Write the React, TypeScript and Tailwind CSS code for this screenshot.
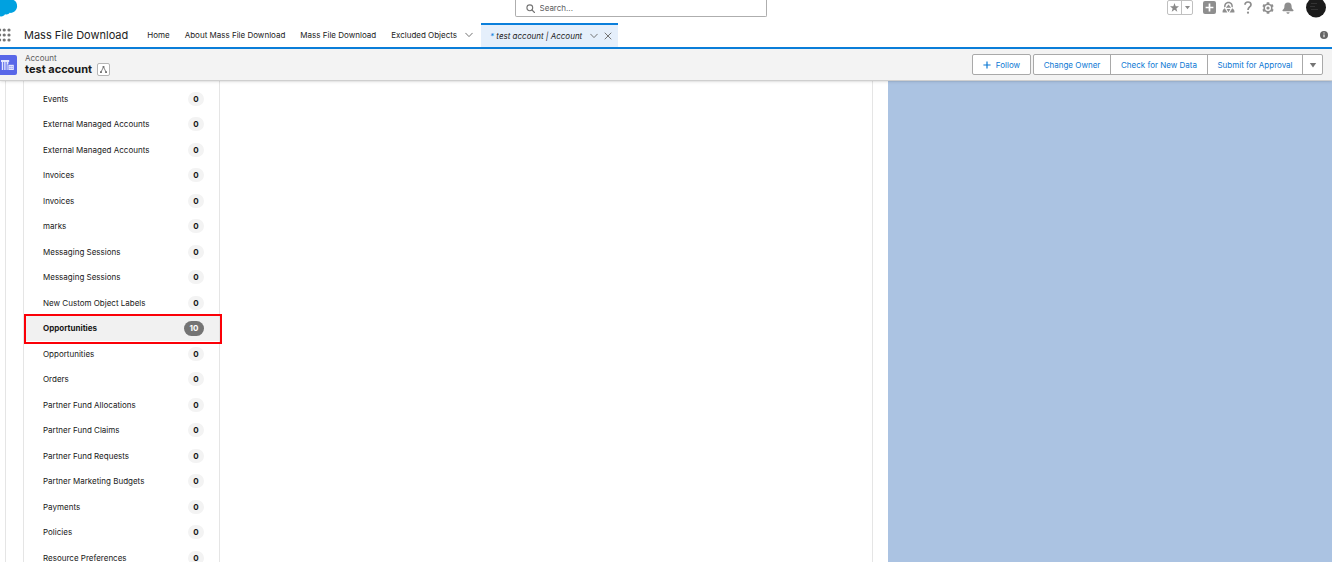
import React from 'react';

interface RelatedItem {
  label: string;
  count: number;
  selected?: boolean;
}

const relatedItems: RelatedItem[] = [
  { label: 'Events', count: 0 },
  { label: 'External Managed Accounts', count: 0 },
  { label: 'External Managed Accounts', count: 0 },
  { label: 'Invoices', count: 0 },
  { label: 'Invoices', count: 0 },
  { label: 'marks', count: 0 },
  { label: 'Messaging Sessions', count: 0 },
  { label: 'Messaging Sessions', count: 0 },
  { label: 'New Custom Object Labels', count: 0 },
  { label: 'Opportunities', count: 10, selected: true },
  { label: 'Opportunities', count: 0 },
  { label: 'Orders', count: 0 },
  { label: 'Partner Fund Allocations', count: 0 },
  { label: 'Partner Fund Claims', count: 0 },
  { label: 'Partner Fund Requests', count: 0 },
  { label: 'Partner Marketing Budgets', count: 0 },
  { label: 'Payments', count: 0 },
  { label: 'Policies', count: 0 },
  { label: 'Resource Preferences', count: 0 },
];

const navLinks = ['Home', 'About Mass File Download', 'Mass File Download'];

function Chevron() {
  return (
    <svg className="w-2 h-2" viewBox="0 0 8 8" fill="none" stroke="#747474" strokeWidth="1">
      <path d="M0.7 2.2 L4 5.6 L7.3 2.2" strokeLinecap="round" />
    </svg>
  );
}

function Caret() {
  return (
    <svg className="w-2 h-2" viewBox="0 0 8 8" fill="#747474">
      <path d="M0.8 2 H7.2 L4 6.4 Z" />
    </svg>
  );
}

function GlobalHeader() {
  return (
    <header className="flex items-start justify-between h-[23px]">
      <svg className="w-[18px] h-[17px] shrink-0" viewBox="0 0 18 17" fill="#00a1e0">
        <path d="M0 0 H13.6 C16 1.2 17.3 3.6 17.1 6.6 C16.8 10.6 13.4 13.4 9.7 12.8 C8.6 14.4 6.8 14.8 5 14.2 C4 16 2 16.8 0 16.2 Z" />
      </svg>
      <div className="flex items-center w-[252px] h-[17px] ml-24 pl-[10px] gap-[5px] border border-t-0 border-[#aeaeae] rounded-b-xs bg-white">
        <svg className="w-[9px] h-[9px]" viewBox="0 0 9 9" fill="none" stroke="#747474" strokeWidth="1.1">
          <circle cx="3.8" cy="3.8" r="2.9" />
          <path d="M6 6 L8.5 8.5" strokeLinecap="round" />
        </svg>
        <input
          type="search"
          aria-label="Search"
          placeholder="Search..."
          className="flex-1 min-w-0 text-[8px] leading-[12px] outline-none placeholder:text-[#5c5c5c]"
        />
      </div>
      <div className="flex items-center h-[15px] pr-[6px]">
        <div className="flex h-[15px] w-[26px] border border-[#c0c0c0] rounded-xs mr-[10px]">
          <button type="button" aria-label="Favorite" className="flex-1 flex items-center justify-center border-r border-[#c0c0c0]">
            <svg className="w-[9px] h-[9px]" viewBox="0 0 10 10" fill="#8a8a8a">
              <path d="M5 0 L6.3 3.6 L10 3.7 L7.1 6 L8.1 9.7 L5 7.6 L1.9 9.7 L2.9 6 L0 3.7 L3.7 3.6 Z" />
            </svg>
          </button>
          <button type="button" aria-label="Favorites list" className="w-[10px] flex items-center justify-center">
            <svg className="w-[5px] h-[5px]" viewBox="0 0 6 6" fill="#8a8a8a">
              <path d="M0 1.2 H6 L3 5 Z" />
            </svg>
          </button>
        </div>
        <button type="button" aria-label="Global actions" className="mr-[6px]">
          <svg className="w-[13px] h-[13px]" viewBox="0 0 13 13">
            <rect width="13" height="13" rx="2" fill="#8e8e8e" />
            <path d="M6.5 2.6 V10.4 M2.6 6.5 H10.4" stroke="#fff" strokeWidth="1.7" />
          </svg>
        </button>
        <button type="button" aria-label="Guidance center" className="mr-[9px]">
          <svg className="w-[13px] h-[13px]" viewBox="0 0 13 13" fill="#8e8e8e">
            <path d="M2.2 6.4 C1.6 3.2 3.6 0.8 6.5 0.8 C9.4 0.8 11.4 3.2 10.8 6.4 L9.4 5.8 C9.6 3.8 8.4 2.2 6.5 2.2 C4.6 2.2 3.4 3.8 3.6 5.8 Z" />
            <path d="M6.5 3.4 L9.2 6.8 H3.8 Z" />
            <path d="M2.8 7.2 L5.4 11.6 H0.6 C0.2 9.6 1.2 7.8 2.8 7.2 Z" />
            <path d="M10.2 7.2 L7.6 11.6 H12.4 C12.8 9.6 11.8 7.8 10.2 7.2 Z" />
            <path d="M4.6 8 H8.4 L6.5 11.2 Z" />
          </svg>
        </button>
        <button type="button" aria-label="Help" className="mr-[10px]">
          <svg className="w-[8px] h-[13px]" viewBox="0 0 8 13" fill="none" stroke="#8e8e8e" strokeWidth="1.7">
            <path d="M1 3.8 C1 2 2.2 1 4 1 C5.8 1 7 2.1 7 3.7 C7 6 4 5.9 4 8.9" />
            <circle cx="4" cy="11.7" r="1.1" fill="#8e8e8e" stroke="none" />
          </svg>
        </button>
        <button type="button" aria-label="Setup" className="mr-[8px]">
          <svg className="w-[12px] h-[12px]" viewBox="0 0 12 12" fill="none" stroke="#8e8e8e">
            <circle cx="6" cy="6" r="3.8" strokeWidth="1.6" />
            <path
              d="M6 0.2 V2.2 M6 9.8 V11.8 M1 3.1 L2.7 4.1 M9.3 7.9 L11 8.9 M1 8.9 L2.7 7.9 M9.3 4.1 L11 3.1"
              strokeWidth="2.6"
            />
            <circle cx="6" cy="6" r="1.6" fill="#8e8e8e" stroke="none" />
          </svg>
        </button>
        <button type="button" aria-label="Notifications" className="mr-[12px]">
          <svg className="w-[12px] h-[12px]" viewBox="0 0 12 12" fill="#8e8e8e">
            <path d="M6 0.4 C3.6 0.4 2.4 2 2.4 4.2 C2.4 6.4 1.8 7 0.8 7.8 C0.2 8.4 0.4 9.2 1.2 9.2 H10.8 C11.6 9.2 11.8 8.4 11.2 7.8 C10.2 7 9.6 6.4 9.6 4.2 C9.6 2 8.4 0.4 6 0.4 Z" />
            <path d="M4.4 10.2 H7.6 C7.4 11.3 6.8 11.7 6 11.7 C5.2 11.7 4.6 11.3 4.4 10.2 Z" />
          </svg>
        </button>
        <button type="button" aria-label="View profile" className="self-start">
          <svg className="w-5 h-[18px]" viewBox="0 0 20 18">
            <circle cx="10" cy="7.5" r="10" fill="#1b1b1b" />
            <path d="M5 3.5 H11 M4 6.5 H9 M5 9.5 H12" stroke="#3a3a3a" strokeWidth="0.8" />
          </svg>
        </button>
      </div>
    </header>
  );
}

function NavBar() {
  return (
    <nav className="flex items-stretch h-[26px] border-b-2 border-[#0b7fdb] text-[8px] leading-[12px] text-[#222]">
      <button type="button" aria-label="App launcher" className="w-[11px] mr-[13px] flex items-center">
        <svg className="w-[11px] h-[14px]" viewBox="0 0 11 14" fill="#747474">
          {[2, 7, 12].map((y) => (
            <g key={y}>
              <circle cx="-0.4" cy={y} r="1.6" />
              <circle cx="4.2" cy={y} r="1.6" />
              <circle cx="9" cy={y} r="1.6" />
            </g>
          ))}
        </svg>
      </button>
      <span className="flex items-center text-[11px] leading-[14px] mr-[19px]">Mass File Download</span>
      <div className="flex items-center gap-[15px]">
        {navLinks.map((label) => (
          <a key={label} href="#">
            {label}
          </a>
        ))}
        <a href="#">Excluded Objects</a>
      </div>
      <button type="button" aria-label="Excluded Objects list" className="ml-2 mr-2">
        <Chevron />
      </button>
      <div className="flex items-center w-[137px] pl-[9px] pr-[6px] bg-[#e5effb] border-t-2 border-[#0b7fdb]">
        <a href="#" className="flex-1 italic whitespace-nowrap">
          <span className="text-[#0b7fdb]">*</span> test account | Account
        </a>
        <button type="button" aria-label="Tab actions">
          <Chevron />
        </button>
        <button type="button" aria-label="Close tab" className="ml-[6px]">
          <svg className="w-2 h-2" viewBox="0 0 8 8" fill="none" stroke="#747474" strokeWidth="1">
            <path d="M1 1 L7 7 M7 1 L1 7" strokeLinecap="round" />
          </svg>
        </button>
      </div>
      <button type="button" aria-label="Page information" className="ml-auto mr-[4px]">
        <svg className="w-2 h-2" viewBox="0 0 8 8">
          <circle cx="4" cy="4" r="4" fill="#666" />
          <path d="M4 1.5 V2.5 M4 3.4 V6.2" stroke="#fff" strokeWidth="1.1" />
        </svg>
      </button>
    </nav>
  );
}

function RecordHeader() {
  return (
    <div className="relative flex items-center justify-between h-8 bg-[#f3f3f3] border-b border-[#cfcfcf] shadow-sm">
      <div className="flex items-center">
        <svg className="w-[17px] h-5 mr-2" viewBox="0 0 17 20">
          <path d="M0 0 H15 Q17 0 17 2 V18 Q17 20 15 20 H0 Z" fill="#5867e8" />
          <path d="M1 5 H9.2 V7 H1 Z M1.8 7 H3.2 V15 H1.8 Z M4.2 7 H5.6 V15 H4.2 Z M6.6 7 H8.4 V9.2 H7.6 V15 H6.6 Z" fill="#e4e7fd" />
          <path d="M8.4 9.8 H13.8 V15 H8.4 Z" fill="#e4e7fd" />
          <path d="M9.6 11.6 H10.6 M11.6 11.6 H12.6 M9.6 13.4 H10.6 M11.6 13.4 H12.6" stroke="#5867e8" strokeWidth="0.8" />
        </svg>
        <div>
          <p className="text-[8px] leading-[9px] text-[#5c5c5c]">Account</p>
          <div className="flex items-center gap-[5px]">
            <h1 className="text-[11px] leading-[12px] font-bold text-[#181818]">test account</h1>
            <button
              type="button"
              aria-label="View account hierarchy"
              className="flex items-center justify-center w-[13px] h-[13px] bg-white border border-[#b5b5b5] rounded-xs"
            >
              <svg className="w-[9px] h-[9px]" viewBox="0 0 9 9" fill="none" stroke="#747474" strokeWidth="0.9">
                <path d="M4.5 2 L2 7 M4.5 2 L7 7" />
                <path d="M3.6 1 H5.4 V2.8 H3.6 Z M1 6.2 H2.9 V8 H1 Z M6.1 6.2 H8 V8 H6.1 Z" fill="#747474" stroke="none" />
              </svg>
            </button>
          </div>
        </div>
      </div>
      <div className="flex gap-[2px] pr-[9px] text-[8px] leading-[12px] text-[#0b78d4]">
        <button
          type="button"
          className="flex items-center justify-center gap-[5px] w-[59px] h-[21px] bg-white border border-[#a9a9a9] rounded-xs"
        >
          <svg className="w-2 h-2" viewBox="0 0 8 8" stroke="#0b78d4" strokeWidth="1.2">
            <path d="M4 0.4 V7.6 M0.4 4 H7.6" />
          </svg>
          Follow
        </button>
        <div className="flex h-[21px] bg-white border border-[#a9a9a9] rounded-xs divide-x divide-[#a9a9a9]">
          <button type="button" className="w-[77px]">
            Change Owner
          </button>
          <button type="button" className="w-[97px]">
            Check for New Data
          </button>
          <button type="button" className="w-[95px]">
            Submit for Approval
          </button>
          <button type="button" aria-label="More actions" className="w-[19px] flex items-center justify-center">
            <Caret />
          </button>
        </div>
      </div>
    </div>
  );
}

function RelatedRow({ label, count, selected }: RelatedItem) {
  return (
    <li
      className={`relative flex items-center justify-between h-[25px] even:h-[26px] pl-[19px] pr-[15px] ${
        selected ? 'bg-[#f1f1f1] font-bold' : ''
      }`}
    >
      <a href="#">{label}</a>
      {selected ? (
        <span className="flex items-center justify-center w-5 h-[15px] rounded-full bg-[#747474] text-white">
          {count}
        </span>
      ) : (
        <span className="flex items-center justify-center w-4 h-[14px] rounded-full bg-[#f3f3f3] font-bold">
          {count}
        </span>
      )}
      {selected && (
        <div className="absolute left-0 -right-[3px] -top-px -bottom-[3px] border-2 border-[#fb0007] pointer-events-none" />
      )}
    </li>
  );
}

export default function App(): React.JSX.Element {
  return (
    <div className="h-screen flex flex-col overflow-hidden bg-white font-['Inter',sans-serif] text-[#181818]">
      <GlobalHeader />
      <NavBar />
      <RecordHeader />
      <main className="flex-1 min-h-0 flex bg-[#abc3e2]">
        <section className="w-2/3 flex bg-white pl-[5px] pr-[15px]">
          <div className="flex-1 flex border-x border-[#e5e5e5] pl-[17px]">
            <ul className="w-[197px] shrink-0 pt-[5px] border-x border-[#e5e5e5] text-[8px] leading-[12px]">
              {relatedItems.map((item, index) => (
                <RelatedRow key={index} {...item} />
              ))}
            </ul>
          </div>
        </section>
      </main>
    </div>
  );
}
